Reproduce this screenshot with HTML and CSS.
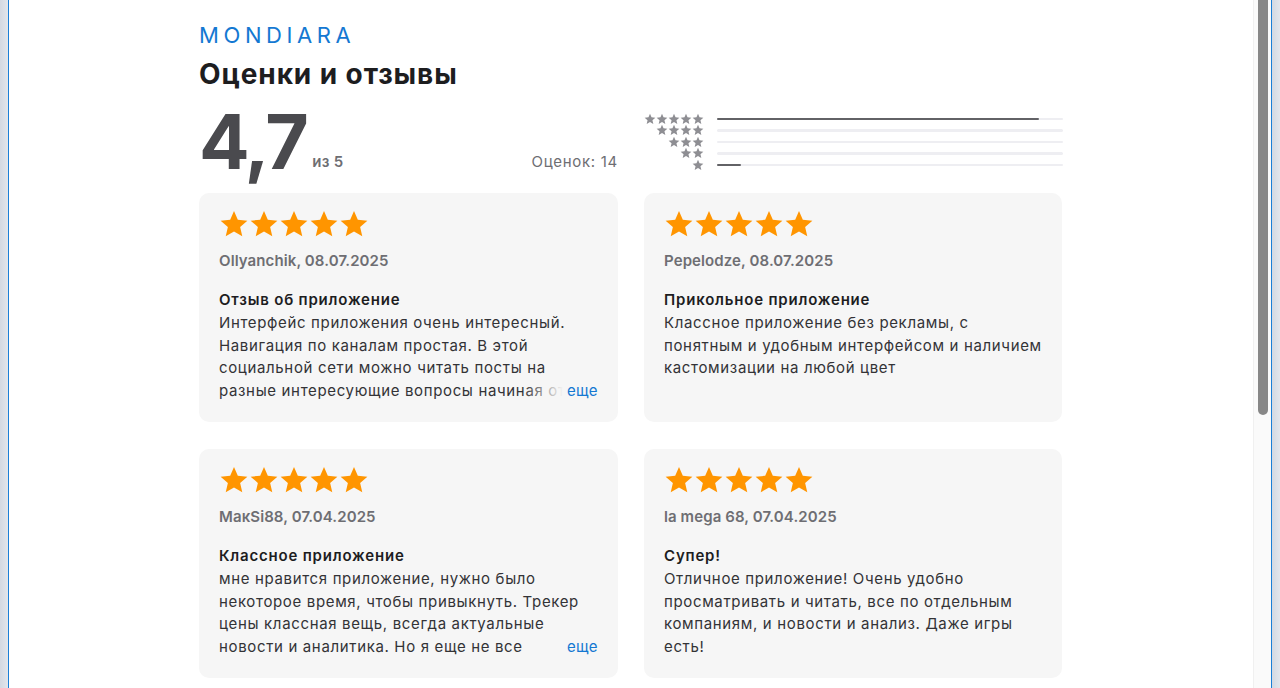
FILE: index.html
```html
<!DOCTYPE html>
<html lang="ru">
<head>
<meta charset="utf-8">
<title>Оценки и отзывы</title>
<link rel="stylesheet" href="styles.css">
</head>
<body>
<svg width="0" height="0" class="defs" aria-hidden="true">
  <defs>
    <symbol id="star" viewBox="0 0 24 24">
      <path d="M12 1.6l3.05 7.05 7.65.68-5.8 5.05 1.72 7.5L12 17.9l-6.62 3.98 1.72-7.5-5.8-5.05 7.65-.68z"/>
    </symbol>
  </defs>
</svg>
<div class="frame">
  <div class="edge"></div>
  <div class="window">
    <main class="page">
      <div class="wrap">
        <div class="brand">MONDIARA</div>
        <h1 class="title">Оценки и отзывы</h1>

        <section class="summary">
          <div class="score">
            <div class="score-main">
              <span class="big">4,7</span>
              <span class="outof">из 5</span>
            </div>
            <span class="count">Оценок: 14</span>
          </div>
          <div class="hist">
            <div class="hrow"><span class="hstars"><svg><use href="#star"/></svg><svg><use href="#star"/></svg><svg><use href="#star"/></svg><svg><use href="#star"/></svg><svg><use href="#star"/></svg></span><span class="track"><span class="fill" style="width:93%"></span></span></div>
            <div class="hrow"><span class="hstars"><svg><use href="#star"/></svg><svg><use href="#star"/></svg><svg><use href="#star"/></svg><svg><use href="#star"/></svg></span><span class="track"><span class="fill" style="width:0%"></span></span></div>
            <div class="hrow"><span class="hstars"><svg><use href="#star"/></svg><svg><use href="#star"/></svg><svg><use href="#star"/></svg></span><span class="track"><span class="fill" style="width:0%"></span></span></div>
            <div class="hrow"><span class="hstars"><svg><use href="#star"/></svg><svg><use href="#star"/></svg></span><span class="track"><span class="fill" style="width:0%"></span></span></div>
            <div class="hrow"><span class="hstars"><svg><use href="#star"/></svg></span><span class="track"><span class="fill" style="width:7%"></span></span></div>
          </div>
        </section>

        <section class="reviews">
          <article class="card">
            <div class="stars"><svg><use href="#star"/></svg><svg><use href="#star"/></svg><svg><use href="#star"/></svg><svg><use href="#star"/></svg><svg><use href="#star"/></svg></div>
            <div class="author">Ollyanchik, 08.07.2025</div>
            <h2 class="rtitle">Отзыв об приложение</h2>
            <div class="body-wrap">
              <p class="rbody">Интерфейс приложения очень интересный. Навигация по каналам простая. В этой социальной сети можно читать посты на разные интересующие вопросы начиная от новостей и заканчивая развлечениями.</p>
              <a class="more" href="#">еще</a>
            </div>
          </article>
          <article class="card">
            <div class="stars"><svg><use href="#star"/></svg><svg><use href="#star"/></svg><svg><use href="#star"/></svg><svg><use href="#star"/></svg><svg><use href="#star"/></svg></div>
            <div class="author">Pepelodze, 08.07.2025</div>
            <h2 class="rtitle">Прикольное приложение</h2>
            <div class="body-wrap">
              <p class="rbody">Классное приложение без рекламы, с понятным и удобным интерфейсом и наличием кастомизации на любой цвет</p>
            </div>
          </article>
          <article class="card">
            <div class="stars"><svg><use href="#star"/></svg><svg><use href="#star"/></svg><svg><use href="#star"/></svg><svg><use href="#star"/></svg><svg><use href="#star"/></svg></div>
            <div class="author">МакSi88, 07.04.2025</div>
            <h2 class="rtitle">Классное приложение</h2>
            <div class="body-wrap">
              <p class="rbody">мне нравится приложение, нужно было некоторое время, чтобы привыкнуть. Трекер цены классная вещь, всегда актуальные новости и аналитика. Но я еще не все функции&nbsp;попробовала, но уже нравится.</p>
              <a class="more" href="#">еще</a>
            </div>
          </article>
          <article class="card">
            <div class="stars"><svg><use href="#star"/></svg><svg><use href="#star"/></svg><svg><use href="#star"/></svg><svg><use href="#star"/></svg><svg><use href="#star"/></svg></div>
            <div class="author">la mega 68, 07.04.2025</div>
            <h2 class="rtitle">Супер!</h2>
            <div class="body-wrap">
              <p class="rbody">Отличное приложение! Очень удобно просматривать и читать, все по отдельным компаниям, и новости и анализ. Даже игры есть!</p>
            </div>
          </article>
        </section>
      </div>
    </main>
    <div class="scrollbar"><div class="thumb"></div></div>
  </div>
  <div class="edge"></div>
</div>
</body>
</html>
```

FILE: styles.css
```css
* { box-sizing: border-box; }
html, body { margin: 0; padding: 0; height: 100%; }
body {
  font-family: Inter, "Noto Sans", "Liberation Sans", sans-serif;
  color: #1d1d1f;
  background: #fff;
  overflow: hidden;
}
.defs { position: absolute; }

.frame {
  display: flex;
  height: 688px;
}
.edge {
  width: 8px;
  flex: none;
  background: linear-gradient(90deg, #d3d9e2, #e2e6ec);
}
.window {
  flex: 1;
  display: flex;
  border-left: 1px solid #1b7fd6;
  border-right: 1px solid #1b7fd6;
  background: #fff;
  min-width: 0;
}
.page {
  flex: 1;
  min-width: 0;
  overflow: hidden;
}
.scrollbar {
  width: 18px;
  flex: none;
  background: #fafafa;
  border-left: 1px solid #f0f0f0;
  padding: 0 3px 0 4px;
}
.thumb {
  height: 415px;
  background: #878787;
  border-radius: 0 0 6px 6px;
}

.wrap {
  width: 864px;
  margin: 0 auto;
  padding-top: 21px;
}
.brand {
  font-size: 22px;
  font-weight: 400;
  letter-spacing: 4.6px;
  color: #1478d2;
  line-height: 28px;
}
.title {
  margin: 8px 0 0;
  font-size: 28px;
  font-weight: 700;
  line-height: 34px;
  letter-spacing: 0.9px;
  color: #1d1d1f;
}

.summary {
  display: grid;
  grid-template-columns: 419px 1fr;
  gap: 26px;
  margin-top: 20px;
  height: 82px;
}
.score {
  display: flex;
  justify-content: space-between;
  align-items: baseline;
  margin-top: -9px;
}
.score-main {
  display: flex;
  align-items: baseline;
  gap: 6px;
}
.big {
  font-size: 75px;
  font-weight: 700;
  line-height: 80px;
  letter-spacing: -2.6px;
  color: #4a4a4e;
}
.outof {
  font-size: 15px;
  font-weight: 600;
  letter-spacing: 0.3px;
  color: #6e6e73;
  position: relative;
  top: -2px;
}
.count {
  font-size: 15px;
  color: #6e6e73;
  letter-spacing: 0.7px;
  position: relative;
  top: -2px;
}

.hist {
  display: flex;
  flex-direction: column;
  margin-top: 2px;
}
.hrow {
  display: flex;
  align-items: center;
  height: 11.5px;
  gap: 13px;
}
.hstars {
  width: 60px;
  display: flex;
  justify-content: flex-end;
}
.hstars svg {
  width: 12px;
  height: 12px;
  fill: #8e8e93;
}
.track {
  flex: 1;
  height: 2.5px;
  background: #eeeef2;
  border-radius: 2px;
  display: block;
}
.fill {
  display: block;
  height: 100%;
  background: #626266;
  border-radius: 2px;
}

.reviews {
  display: grid;
  grid-template-columns: 419px 418px;
  column-gap: 26px;
  row-gap: 27px;
}
.card {
  background: #f6f6f6;
  border-radius: 10px;
  height: 229px;
  padding: 15px 20px 0;
}
.stars {
  display: flex;
  height: 32px;
}
.stars svg {
  width: 30px;
  height: 32px;
  fill: #ff9500;
}
.author {
  margin-top: 11px;
  font-size: 15px;
  font-weight: 600;
  color: #6e6e73;
  line-height: 20px;
  letter-spacing: 0.1px;
}
.rtitle {
  margin: 19px 0 0;
  font-size: 15px;
  font-weight: 600;
  line-height: 20px;
  letter-spacing: 0.8px;
  color: #1d1d1f;
}
.body-wrap {
  position: relative;
}
.rbody {
  margin: 2px 0 0;
  font-size: 15px;
  line-height: 22.5px;
  letter-spacing: 0.65px;
  color: #333336;
  max-height: 90px;
  overflow: hidden;
}
.more {
  position: absolute;
  right: 0;
  bottom: 0;
  font-size: 15px;
  line-height: 22.5px;
  letter-spacing: 0.4px;
  color: #1478d2;
  text-decoration: none;
  padding-left: 44px;
  background: linear-gradient(90deg, rgba(246,246,246,0) 0, #f6f6f6 40px);
}
```
